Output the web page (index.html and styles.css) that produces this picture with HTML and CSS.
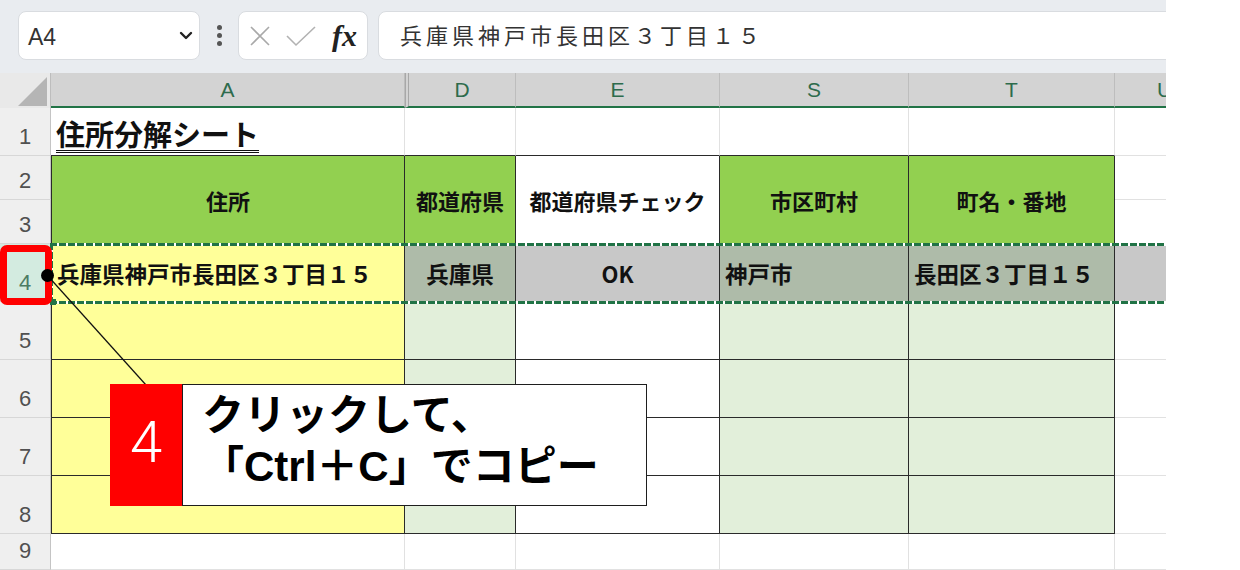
FILE: index.html
```html
<!DOCTYPE html>
<html lang="ja">

<head>
    <meta charset="UTF-8">
    <meta name="viewport" content="width=device-width, initial-scale=1.0">
    <title>住所分解シート</title>

    <link rel="stylesheet" href="styles.css">
</head>

<body>

    <div class="screen">

        <div class="toolbar">
            <div class="namebox">
                <span>A4</span>
                <svg width="14" height="10" viewBox="0 0 14 10">
                    <path d="M2 2 L7 7 L12 2" fill="none" stroke="#222" stroke-width="2.4" stroke-linecap="round" stroke-linejoin="round" />
                </svg>
            </div>
            <div class="kebab"><i></i><i></i><i></i></div>
            <div class="fxbox">
                <svg width="22" height="22" viewBox="0 0 22 22">
                    <path d="M2 2 L20 20 M20 2 L2 20" stroke="#a9a9a9" stroke-width="1.6" />
                </svg>
                <svg width="32" height="22" viewBox="0 0 32 22">
                    <path d="M2 11 L11 20 L30 2" fill="none" stroke="#b2b2b2" stroke-width="1.6" />
                </svg>
                <span class="fx">fx</span>
            </div>
            <div class="formula">兵庫県神戸市長田区３丁目１５</div>
        </div>

        <div class="sheet">
            <!-- column headers -->
            <div class="corner">
                <svg width="29" height="29" viewBox="0 0 29 29">
                    <path d="M29 0 L29 29 L0 29 Z" fill="#b5b5b5" />
                </svg>
            </div>
            <div class="colh">A</div>
            <div class="colh after-hidden">D</div>
            <div class="colh">E</div>
            <div class="colh">S</div>
            <div class="colh">T</div>
            <div class="colh">U</div>

            <!-- row 1 -->
            <div class="rowh">1</div>
            <div class="cell title table-top"><span>住所分解シート</span></div>
            <div class="cell table-top"></div>
            <div class="cell table-top"></div>
            <div class="cell table-top"></div>
            <div class="cell table-top"></div>
            <div class="cell"></div>

            <!-- rows 2-3 (merged headers) -->
            <div class="rowh">2</div>
            <div class="cell t lead green span2">住所</div>
            <div class="cell t green span2">都道府県</div>
            <div class="cell t plain span2">都道府県チェック</div>
            <div class="cell t green span2">市区町村</div>
            <div class="cell t green span2">町名・番地</div>
            <div class="cell"></div>
            <div class="rowh">3</div>
            <div class="cell"></div>

            <!-- row 4 -->
            <div class="rowh active">4</div>
            <div class="cell t lead yellow">兵庫県神戸市長田区３丁目１５</div>
            <div class="cell t sel-green center">兵庫県</div>
            <div class="cell t sel-grey center">OK</div>
            <div class="cell t sel-green">神戸市</div>
            <div class="cell t sel-green">長田区３丁目１５</div>
            <div class="cell sel-grey"></div>

            <!-- rows 5-8 -->
            <div class="rowh">5</div>
            <div class="cell t lead yellow"></div>
            <div class="cell t pale"></div>
            <div class="cell t"></div>
            <div class="cell t pale"></div>
            <div class="cell t pale"></div>
            <div class="cell"></div>

            <div class="rowh">6</div>
            <div class="cell t lead yellow"></div>
            <div class="cell t pale"></div>
            <div class="cell t"></div>
            <div class="cell t pale"></div>
            <div class="cell t pale"></div>
            <div class="cell"></div>

            <div class="rowh">7</div>
            <div class="cell t lead yellow"></div>
            <div class="cell t pale"></div>
            <div class="cell t"></div>
            <div class="cell t pale"></div>
            <div class="cell t pale"></div>
            <div class="cell"></div>

            <div class="rowh">8</div>
            <div class="cell t lead yellow"></div>
            <div class="cell t pale"></div>
            <div class="cell t"></div>
            <div class="cell t pale"></div>
            <div class="cell t pale"></div>
            <div class="cell"></div>

            <!-- row 9 -->
            <div class="rowh">9</div>
            <div class="cell"></div>
            <div class="cell"></div>
            <div class="cell"></div>
            <div class="cell"></div>
            <div class="cell"></div>
            <div class="cell"></div>
        </div>

        <!-- copy marquee around row 4 -->
        <div class="copy-range"></div>
        <div class="fill-handle"></div>

        <!-- annotation -->
        <div class="row-mark"></div>
        <svg class="leader" width="1166" height="570">
            <line x1="47" y1="275" x2="146" y2="385" stroke="#111" stroke-width="1.2" />
        </svg>
        <div class="dot"></div>

        <div class="callout">
            <div class="callout-num">4</div>
            <div class="callout-msg">
                <p>クリックして、</p>
                <p>「Ctrl＋C」でコピー</p>
            </div>
        </div>

    </div>

</body>

</html>
```

FILE: styles.css
```css
*,
*::before,
*::after {
    margin: 0;
    padding: 0;
    box-sizing: border-box;
}

body {
    background-color: #fff;
    font-family: "Noto Sans CJK JP", sans-serif;
}

.screen {
    position: relative;
    width: 1166px;
    height: 570px;
    overflow: hidden;
    background-color: #fff;
}

/* formula bar */

.toolbar {
    height: 73px;
    background-color: #e9ecf0;
    display: flex;
    align-items: flex-start;
    padding: 11px 0 0 18px;
}

.namebox {
    width: 182px;
    height: 49px;
    background-color: #fff;
    border: 1px solid #d9dce0;
    border-radius: 8px;
    display: flex;
    align-items: center;
    justify-content: space-between;
    padding: 0 6px 0 9px;
}

.namebox span {
    font-family: "Liberation Sans", sans-serif;
    font-size: 23px;
    color: #333;
    padding-top: 3px;
}

.kebab {
    width: 38px;
    height: 49px;
    display: flex;
    flex-direction: column;
    align-items: center;
    justify-content: center;
    gap: 3px;
}

.kebab i {
    width: 5px;
    height: 5px;
    border-radius: 50%;
    background-color: #555;
}

.fxbox {
    width: 130px;
    height: 49px;
    background-color: #fff;
    border: 1px solid #d9dce0;
    border-radius: 8px;
    display: flex;
    align-items: center;
    padding-left: 10px;
    gap: 14px;
}

.fx {
    font-family: "Liberation Serif", serif;
    font-style: italic;
    font-weight: bold;
    font-size: 30px;
    color: #222;
    margin-left: 1px;
}

.formula {
    flex: 1;
    margin-left: 10px;
    margin-right: -20px;
    height: 49px;
    background-color: #fff;
    border: 1px solid #d9dce0;
    border-radius: 8px;
    padding: 0 0 4px 21px;
    display: flex;
    align-items: center;
    font-size: 22px;
    letter-spacing: 4px;
    color: #333;
}

/* sheet grid */

.sheet {
    display: grid;
    grid-template-columns: 51px 354px 111px 204px 189px 206px 100px;
    grid-template-rows: 35px 48px 44px 44px 58px 58px 58px 58px 58px 36px;
}

.corner {
    background-color: #e9e9e9;
    border-right: 1px solid #bdbdbd;
    display: flex;
    align-items: flex-end;
    justify-content: flex-end;
    padding: 0 3px 2px 0;
}

.colh {
    background-color: #d3d3d3;
    border-right: 1px solid #bdbdbd;
    border-bottom: 2px solid #217346;
    display: flex;
    align-items: center;
    justify-content: center;
    font-family: "Liberation Sans", sans-serif;
    font-size: 21px;
    color: #2d6b4c;
}

.colh.after-hidden {
    border-left: 4px double #a8a8a8;
}

.rowh {
    background-color: #efefef;
    border-right: 1px solid #c4c4c4;
    border-bottom: 1px solid #d7d7d7;
    display: flex;
    align-items: flex-end;
    justify-content: center;
    padding-bottom: 7px;
    font-family: "Liberation Sans", sans-serif;
    font-size: 22px;
    line-height: 1;
    color: #505050;
}

.rowh.active {
    background-color: #d3ebe0;
    color: #4d7c64;
}

.cell {
    border-right: 1px solid #e1e1e1;
    border-bottom: 1px solid #e1e1e1;
    display: flex;
    align-items: center;
    padding: 0 5px;
    font-size: 22px;
    font-weight: bold;
    color: #111;
    white-space: nowrap;
    overflow: hidden;
}

.cell.t {
    border-right: 1px solid #2a2a2a;
    border-bottom: 1px solid #2a2a2a;
}

.cell.lead {
    border-left: 1px solid #2a2a2a;
}

.cell.table-top {
    border-bottom: 1px solid #2a2a2a;
}

.cell.span2 {
    grid-row: span 2;
    justify-content: center;
}

.cell.center {
    justify-content: center;
}

.cell.yellow,
.cell.sel-green {
    font-size: 22.5px;
}

.title {
    align-items: flex-end;
    padding-bottom: 1px;
}

.title span {
    font-size: 29px;
    text-decoration: underline double;
    text-decoration-thickness: 1px;
    text-underline-offset: 4px;
}

.green {
    background-color: #92d050;
}

.plain {
    background-color: #fff;
}

.yellow {
    background-color: #ffff99;
}

.pale {
    background-color: #e2efda;
}

.sel-green {
    background-color: #aebba9;
}

.sel-grey {
    background-color: #c8c8c8;
}

/* copy marquee */

.copy-range {
    position: absolute;
    left: 50px;
    top: 243px;
    width: 1130px;
    height: 61px;
    background:
        repeating-linear-gradient(90deg, #217346 0 7px, #fff 7px 9px) top left / 100% 3px no-repeat,
        repeating-linear-gradient(90deg, #217346 0 7px, #fff 7px 9px) bottom left / 100% 3px no-repeat,
        repeating-linear-gradient(180deg, #217346 0 7px, #fff 7px 9px) top left / 3px 100% no-repeat;
}

.fill-handle {
    position: absolute;
    left: 50px;
    top: 299px;
    width: 6px;
    height: 6px;
    background-color: #217346;
}

/* annotation */

.row-mark {
    position: absolute;
    left: 0;
    top: 245px;
    width: 52px;
    height: 60px;
    border: 7px solid #ff0000;
    border-radius: 7px;
}

.leader {
    position: absolute;
    left: 0;
    top: 0;
}

.dot {
    position: absolute;
    left: 41px;
    top: 269px;
    width: 13px;
    height: 13px;
    border-radius: 50%;
    background-color: #000;
}

.callout {
    position: absolute;
    left: 110px;
    top: 384px;
    display: flex;
}

.callout-num {
    width: 72px;
    height: 122px;
    background-color: #ff0000;
    color: #fff;
    display: flex;
    align-items: center;
    justify-content: center;
    font-family: Roboto, "Liberation Sans", sans-serif;
    font-weight: 300;
    font-size: 58px;
    padding-bottom: 6px;
}

.callout-msg {
    width: 465px;
    height: 122px;
    background-color: #fff;
    border: 1.5px solid #1e1e1e;
    padding: 5px 0 0 19px;
    font-family: "Liberation Sans", "Noto Sans CJK JP", sans-serif;
    font-size: 42px;
    font-weight: bold;
    line-height: 51px;
    color: #000;
}
```
